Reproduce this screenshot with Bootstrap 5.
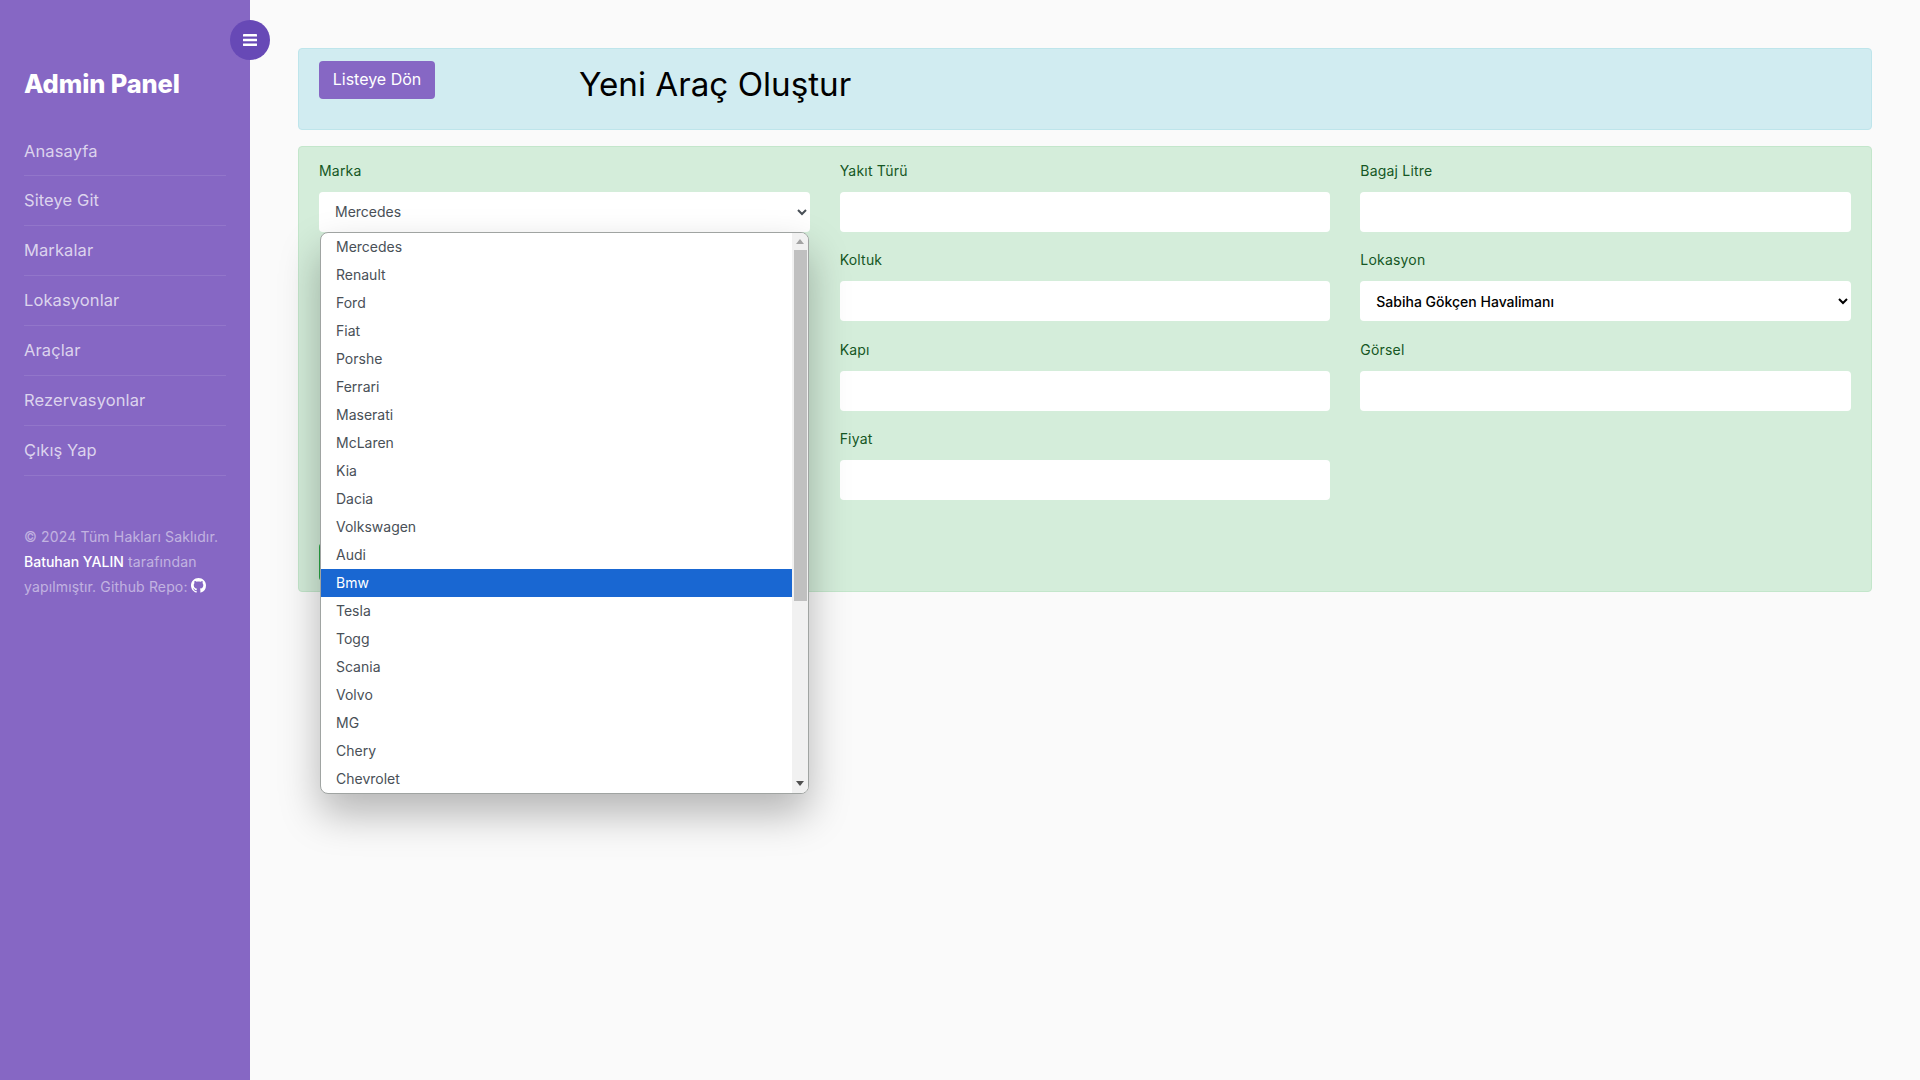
<!DOCTYPE html>
<html lang="tr">
<head>
<meta charset="utf-8">
<title>Yeni Araç Oluştur</title>
<link rel="stylesheet" href="https://cdn.jsdelivr.net/npm/bootstrap@5.3.0/dist/css/bootstrap.min.css">
<style>
body { background:#fafafa; font-family:Inter,"Noto Sans",sans-serif; font-size:14px; }
.side-bar { width:250px; flex:0 0 250px; min-height:100vh; background:#8667c4; padding:65px 24px 0; color:rgba(255,255,255,.7); }
.side-toggle { left:230px; top:20px; width:40px; height:40px; background:#6749b6; border:0; border-radius:50%; padding:0; }
.side-title { font-size:25.4px; font-weight:800; line-height:37px; margin:0 0 24.5px; color:#fff; letter-spacing:-.1px; }
.side-link { display:block; padding:10px 0; line-height:28.9px; font-size:16.5px; letter-spacing:.1px; color:rgba(255,255,255,.72); text-decoration:none; border-bottom:1px solid rgba(255,255,255,.1); }
.side-note { margin-top:48px; line-height:25px; font-size:14px; letter-spacing:.15px; color:rgba(255,255,255,.5); }
.side-note b { font-weight:500; letter-spacing:0; color:#fff; }
.side-note svg { margin-left:3px; }
.head-box { background:#d1ecf1; border:1px solid #bee5eb; border-radius:4px; padding:12px 20px 19.5px; margin-bottom:16px; }
.back-btn { background:#8667c4; border:0; border-radius:4px; height:38px; width:116px; padding:0 0 2px; color:#fff; font-size:16px; flex:none; }
.head-title { font-size:33.2px; line-height:47px; font-weight:400; margin:0 0 1px 144px; color:#000; }
.form-box { background:#d4edda; border:1px solid #c3e6cb; border-radius:4px; padding:16px 20px 10px; color:#155724; }
.form-box .row { --bs-gutter-x:30px; }
.fld { margin-bottom:20.5px; }
.fld label { display:block; font-size:14px; letter-spacing:.2px; line-height:16.5px; margin-bottom:12.5px; }
.fld-input { height:40px; border:0; border-radius:4px; padding:0 16px; font-size:14px; color:#495057; }
select.fld-input { appearance:auto; -webkit-appearance:auto; background:#fff; padding:0 2px 0 12px; }
select.fld-dark { color:#000; font-weight:500; }
.save-btn { display:block; width:120px; height:38px; margin-top:22.5px; border:0; border-radius:4px; background:#28a745; }
.pick-menu { top:100%; left:.5px; right:.5px; height:562px; background:#fff; border:1px solid #a0a4a2; border-radius:8px; overflow:hidden; box-shadow:0 20px 40px rgba(0,0,0,.28); z-index:5; }
.pick-list { margin:0; padding:0; list-style:none; flex:1 1 auto; }
.pick-list li { height:28px; line-height:28px; padding-left:15.5px; font-size:14px; color:#495057; }
.pick-list li.active-pick { background:#1967d2; color:#fff; }
.pick-track { width:16px; flex:none; background:#f1f1f1; }
.pick-up { height:17px; }
.pick-thumb { height:351px; width:13px; margin-left:2px; background:#c0c0c0; }
.pick-down { margin-top:auto; height:19px; }
</style>
</head>
<body>
<div class="d-flex position-relative">
  <nav class="side-bar">
    <h1 class="side-title">Admin Panel</h1>
    <ul class="list-unstyled m-0">
      <li><a class="side-link" href="#">Anasayfa</a></li>
      <li><a class="side-link" href="#">Siteye Git</a></li>
      <li><a class="side-link" href="#">Markalar</a></li>
      <li><a class="side-link" href="#">Lokasyonlar</a></li>
      <li><a class="side-link" href="#">Araçlar</a></li>
      <li><a class="side-link" href="#">Rezervasyonlar</a></li>
      <li><a class="side-link" href="#">Çıkış Yap</a></li>
    </ul>
    <p class="side-note">© 2024 Tüm Hakları Saklıdır.<br><b>Batuhan YALIN</b> tarafından yapılmıştır. Github Repo:<svg width="15" height="15" viewBox="0 0 16 16" fill="#fff" class="align-text-top"><path d="M8 0C3.58 0 0 3.58 0 8c0 3.54 2.29 6.53 5.47 7.59.4.07.55-.17.55-.38 0-.19-.01-.82-.01-1.49-2.01.37-2.53-.49-2.69-.94-.09-.23-.48-.94-.82-1.13-.28-.15-.68-.52-.01-.53.63-.01 1.08.58 1.23.82.72 1.21 1.87.87 2.33.66.07-.52.28-.87.51-1.07-1.78-.2-3.64-.89-3.64-3.95 0-.87.31-1.59.82-2.15-.08-.2-.36-1.02.08-2.12 0 0 .67-.21 2.2.82.64-.18 1.32-.27 2-.27.68 0 1.36.09 2 .27 1.53-1.04 2.2-.82 2.2-.82.44 1.1.16 1.92.08 2.12.51.56.82 1.27.82 2.15 0 3.07-1.87 3.75-3.65 3.95.29.25.54.73.54 1.48 0 1.07-.01 1.93-.01 2.2 0 .21.15.46.55.38A8.012 8.012 0 0 0 16 8c0-4.42-3.58-8-8-8z"/></svg></p>
  </nav>
  <button class="side-toggle position-absolute d-flex align-items-center justify-content-center" aria-label="Menü">
    <svg width="14" height="12" viewBox="0 0 14 12" fill="#fff"><rect y="0" width="14" height="2.6" rx=".4"/><rect y="4.7" width="14" height="2.6" rx=".4"/><rect y="9.4" width="14" height="2.6" rx=".4"/></svg>
  </button>
  <main class="flex-grow-1 p-5">
    <div class="head-box d-flex align-items-start">
      <button class="back-btn">Listeye Dön</button>
      <h2 class="head-title">Yeni Araç Oluştur</h2>
    </div>
    <form class="form-box">
      <div class="row">
        <div class="col-4">
          <div class="fld">
            <label>Marka</label>
            <div class="position-relative">
              <select class="form-control fld-input"><option>Mercedes</option></select>
              <div class="pick-menu position-absolute d-flex">
                <ul class="pick-list">
                  <li>Mercedes</li><li>Renault</li><li>Ford</li><li>Fiat</li><li>Porshe</li><li>Ferrari</li><li>Maserati</li><li>McLaren</li><li>Kia</li><li>Dacia</li><li>Volkswagen</li><li>Audi</li><li class="active-pick">Bmw</li><li>Tesla</li><li>Togg</li><li>Scania</li><li>Volvo</li><li>MG</li><li>Chery</li><li>Chevrolet</li>
                </ul>
                <div class="pick-track d-flex flex-column">
                  <div class="pick-up d-flex justify-content-center align-items-center"><svg width="8" height="5" viewBox="0 0 8 5" fill="#a3a3a3"><path d="M4 0 8 5H0z"/></svg></div>
                  <div class="pick-thumb"></div>
                  <div class="pick-down d-flex justify-content-center align-items-center"><svg width="8" height="5" viewBox="0 0 8 5" fill="#505050"><path d="M0 0H8L4 5z"/></svg></div>
                </div>
              </div>
            </div>
          </div>
        </div>
        <div class="col-4">
          <div class="fld"><label>Yakıt Türü</label><input class="form-control fld-input" type="text"></div>
          <div class="fld"><label>Koltuk</label><input class="form-control fld-input" type="text"></div>
          <div class="fld"><label>Kapı</label><input class="form-control fld-input" type="text"></div>
          <div class="fld"><label>Fiyat</label><input class="form-control fld-input" type="text"></div>
        </div>
        <div class="col-4">
          <div class="fld"><label>Bagaj Litre</label><input class="form-control fld-input" type="text"></div>
          <div class="fld"><label>Lokasyon</label><select class="form-control fld-input fld-dark"><option>Sabiha Gökçen Havalimanı</option></select></div>
          <div class="fld"><label>Görsel</label><input class="form-control fld-input" type="text"></div>
        </div>
      </div>
      <button class="save-btn" type="button" aria-label="Kaydet"></button>
    </form>
  </main>
</div>
<script src="https://cdn.jsdelivr.net/npm/bootstrap@5.3.0/dist/js/bootstrap.bundle.min.js"></script>
</body>
</html>
